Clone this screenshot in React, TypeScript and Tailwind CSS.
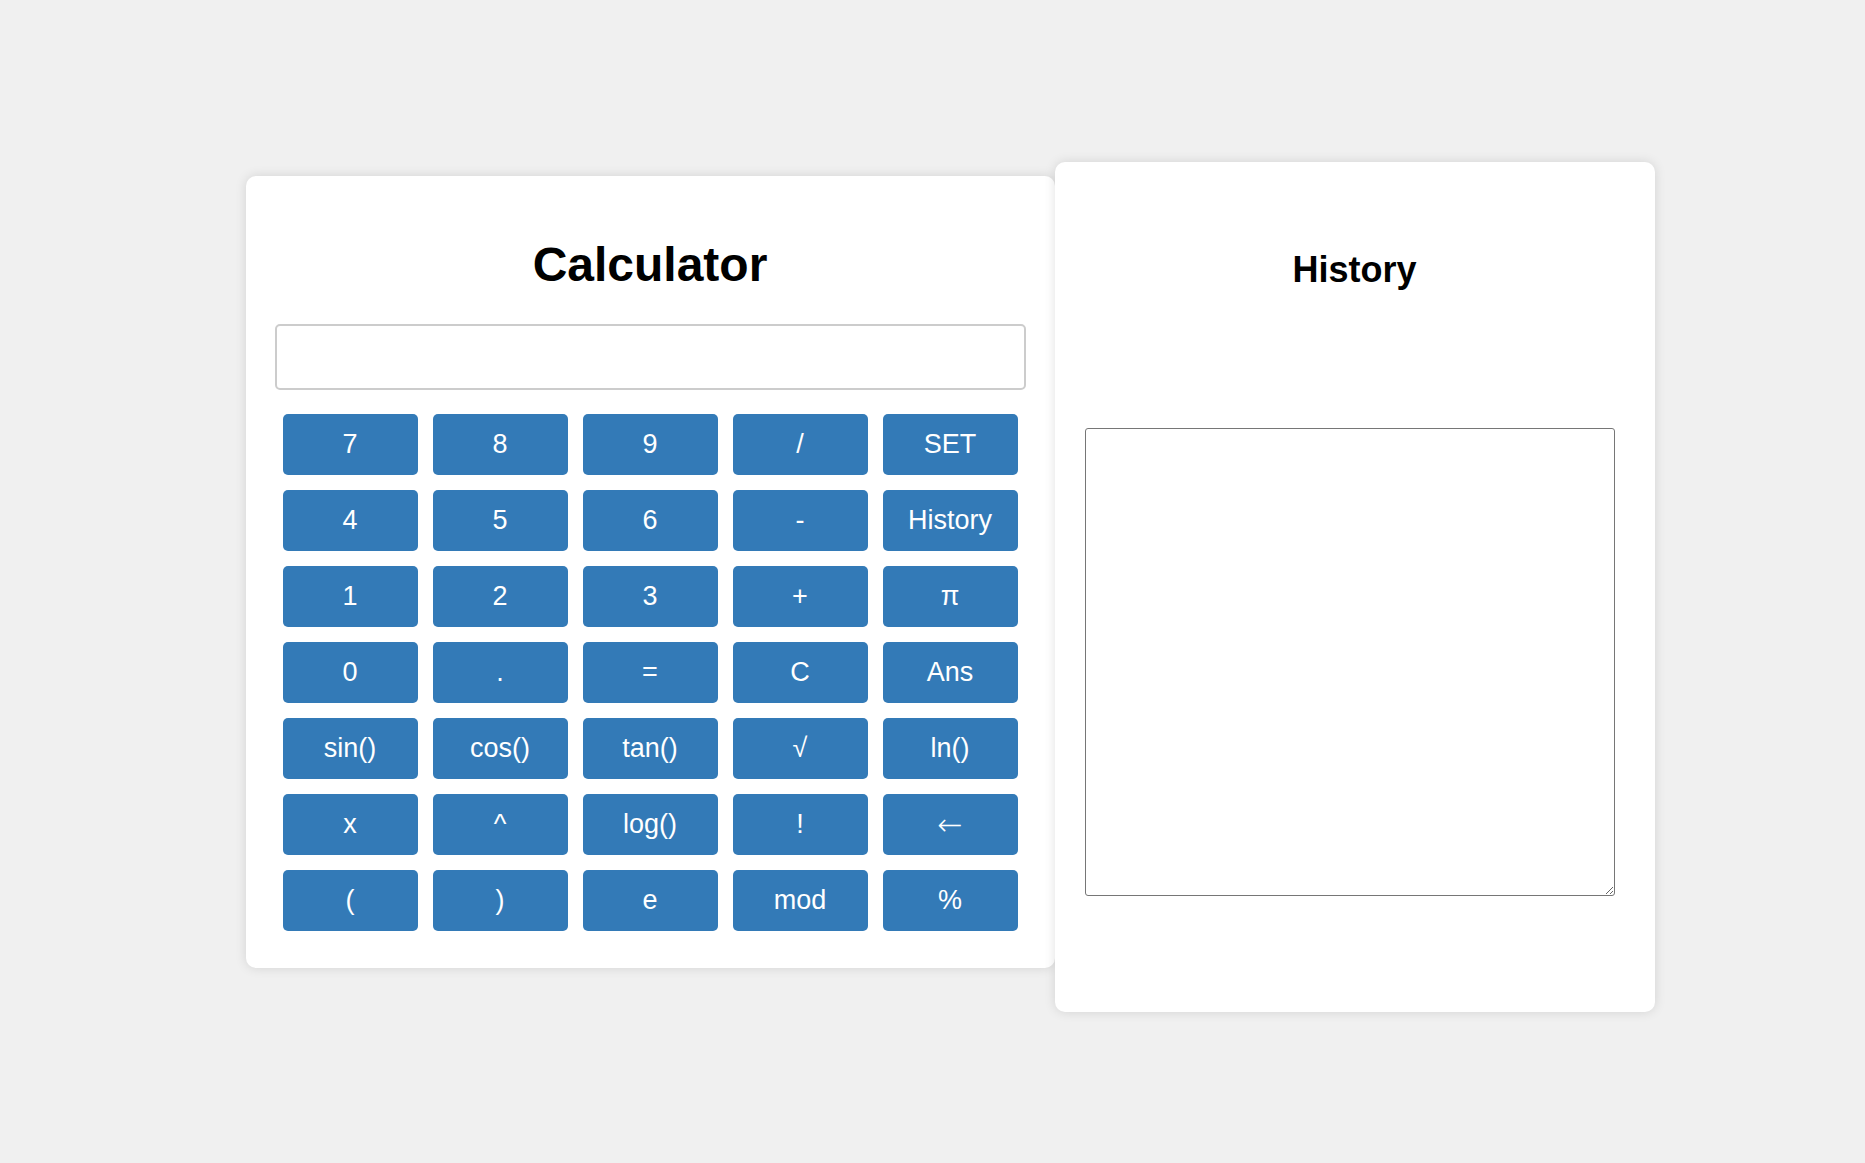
import { useState } from 'react';

const keys = [
  '7', '8', '9', '/', 'SET',
  '4', '5', '6', '-', 'History',
  '1', '2', '3', '+', 'π',
  '0', '.', '=', 'C', 'Ans',
  'sin()', 'cos()', 'tan()', '√', 'ln()',
  'x', '^', 'log()', '!', '←',
  '(', ')', 'e', 'mod', '%',
];

export default function App() {
  const [display, setDisplay] = useState('');
  const [history] = useState('');

  return (
    <div
      className="flex h-[1163px] w-full items-center justify-center bg-[#f0f0f0]"
      style={{ fontFamily: '"Liberation Sans", Arial, sans-serif' }}
    >
      {/* calculator */}
      <div className="mb-[20px] ml-[35px] w-[809px] rounded-[10px] bg-white px-[29px] pt-[61px] pb-[37px] shadow-[0_0_12px_rgba(0,0,0,0.12)]">
        <h1 className="text-center text-[48px] leading-[55px] font-bold text-black">Calculator</h1>
        <input
          type="text"
          value={display}
          onChange={(e) => setDisplay(e.target.value)}
          className="mt-[32px] block h-[66px] w-full rounded-[5px] border-2 border-[#cccccc] bg-white px-3 text-[27px] outline-none"
        />
        <div className="mt-[24px] grid grid-cols-5 gap-[15px] px-[8px]">
          {keys.map((k) => (
            <button
              key={k}
              className={`flex h-[61px] items-center justify-center rounded-[5px] bg-[#337ab7] text-[27px] text-white ${
                k === '←' ? 'font-["DejaVu_Sans"] text-[30px] font-extralight' : ''
              }`}
            >
              {k}
            </button>
          ))}
        </div>
      </div>

      {/* history */}
      <div className="mt-[10px] h-[850px] w-[600px] rounded-[10px] bg-white px-[30px] pt-[87px] shadow-[0_0_12px_rgba(0,0,0,0.12)]">
        <h2 className="text-center text-[36px] leading-[41px] font-bold text-black">History</h2>
        <textarea
          readOnly
          value={history}
          className="mt-[138px] block h-[468px] w-[530px] rounded-[3px] border border-[#767676] bg-white outline-none"
        />
      </div>
    </div>
  );
}
